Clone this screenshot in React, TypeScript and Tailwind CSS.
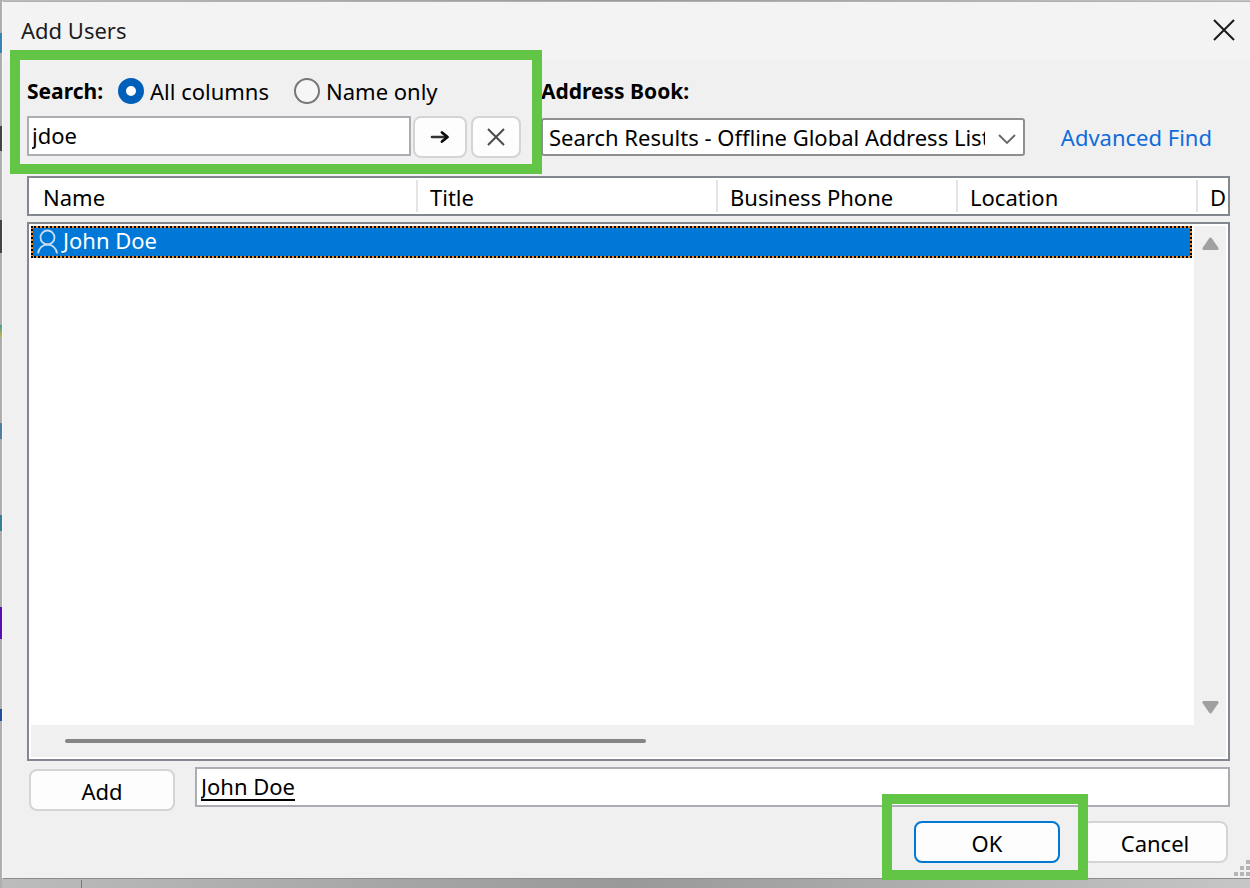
import type { ReactNode } from "react";

function Highlight({ className }: { className: string }) {
  return (
    <div
      aria-hidden="true"
      className={`pointer-events-none absolute border-[10px] border-[#62c546] ${className}`}
    />
  );
}

function PushButton({
  className = "border-[#d4d4d4]",
  children,
}: {
  className?: string;
  children: ReactNode;
}) {
  return (
    <button
      type="button"
      className={`flex h-[42px] w-[146px] shrink-0 items-center justify-center rounded-lg border-2 bg-[#fdfdfd] pt-px ${className}`}
    >
      {children}
    </button>
  );
}

function BackdropEdge() {
  return (
    <div aria-hidden="true" className="pointer-events-none absolute inset-y-0 left-0 w-[2px] bg-[#aeaeae]">
      <i className="absolute top-[33px] h-5 w-full bg-[#3c83b5]" />
      <i className="absolute top-[126px] h-[25px] w-full bg-[#444]" />
      <i className="absolute top-[220px] h-[33px] w-full bg-[#444]" />
      <i className="absolute top-[325px] h-3 w-full bg-linear-to-b from-[#35a08c] to-[#c9b23c]" />
      <i className="absolute top-[423px] h-4 w-full bg-[#4d7fa3]" />
      <i className="absolute top-[515px] h-4 w-full bg-[#357f97]" />
      <i className="absolute top-[607px] h-8 w-full bg-[#5b0cb5]" />
      <i className="absolute top-[709px] h-3 w-full bg-[#1e4f9c]" />
    </div>
  );
}

const columns = [
  { name: "Name", width: "w-[389px] pl-[14px]" },
  { name: "Title", width: "w-[300px] pl-3" },
  { name: "Business Phone", width: "w-[240px] pl-3" },
  { name: "Location", width: "w-[240px] pl-3" },
];

export default function App() {
  return (
    <div className="relative flex min-h-screen flex-col bg-linear-to-r from-[#bcbcbc] via-[#999] to-[#c6c6c6] pt-px pb-[9px] pl-[2px] font-['Noto_Sans','Open_Sans',sans-serif] text-[22px] leading-7 text-black">
      <BackdropEdge />
      <div aria-hidden="true" className="absolute bottom-0 left-[81px] h-2 w-px bg-[#777]" />
      <main className="flex grow flex-col border-t border-b border-l border-t-[#b0b0b0] border-b-[#8c8c8c] border-l-[#fafafa] bg-[#f0f0f0]">
        <header className="flex h-[59px] items-center justify-between bg-[#f3f3f3] pr-[15px] pb-[3px] pl-[18px] text-[#1c1c1c]">
          <h1>Add Users</h1>
          <button type="button" aria-label="Close">
            <svg className="size-[22px]" viewBox="0 0 22 22" fill="none" stroke="#1a1a1a" strokeWidth="2">
              <path d="M1 1l20 20M21 1L1 21" />
            </svg>
          </button>
        </header>

        <div className="flex grow flex-col pr-5 pl-6">
          <div className="flex pt-4">
            <div className="relative mr-5 w-[494px] shrink-0">
              <div className="flex h-7 items-center">
                <label htmlFor="search" className="w-[91px] text-[21px] font-bold">
                  Search:
                </label>
                <label className="flex w-44 items-center gap-[6px] whitespace-nowrap">
                  <input
                    type="radio"
                    name="scope"
                    defaultChecked
                    className="size-[26px] shrink-0 appearance-none rounded-full border-2 border-[#777] bg-[#f6f6f6] checked:border-8 checked:border-[#005fb8] checked:bg-white"
                  />
                  All columns
                </label>
                <label className="flex items-center gap-[6px] whitespace-nowrap">
                  <input
                    type="radio"
                    name="scope"
                    className="size-[26px] shrink-0 appearance-none rounded-full border-2 border-[#777] bg-[#f6f6f6] checked:border-8 checked:border-[#005fb8] checked:bg-white"
                  />
                  Name only
                </label>
              </div>
              <div className="mt-[11px] flex h-[42px] items-start">
                <input
                  id="search"
                  type="text"
                  defaultValue="jdoe"
                  className="h-10 w-96 border-2 border-[#abadb3] bg-white pb-[2px] pl-[3px]"
                />
                <button
                  type="button"
                  aria-label="Search"
                  className="ml-[2px] flex h-[42px] w-[54px] items-center justify-center rounded-lg border-2 border-[#d4d4d4] bg-[#fdfdfd]"
                >
                  <svg className="h-4 w-5" viewBox="0 0 20 16" fill="none" strokeLinecap="round" strokeLinejoin="round">
                    <path d="M2 8h14" stroke="#333" strokeWidth="2.6" />
                    <path d="M12 3.500L17.500 8 12 12.500" stroke="#0a0a0a" strokeWidth="2.8" />
                  </svg>
                </button>
                <button
                  type="button"
                  aria-label="Clear search"
                  className="ml-1 flex h-[42px] w-[50px] items-center justify-center rounded-lg border-2 border-[#d4d4d4] bg-[#fdfdfd]"
                >
                  <svg className="size-[18px]" viewBox="0 0 18 18" fill="none" stroke="#4a4a4a" strokeWidth="2">
                    <path d="M1 1l16 16M17 1L1 17" />
                  </svg>
                </button>
              </div>
              <Highlight className="-top-[27px] -left-[17px] h-[124px] w-[532px]" />
            </div>

            <div className="flex min-w-0 grow flex-col">
              <label htmlFor="book" className="h-7 text-[21px] font-bold">
                Address Book:
              </label>
              <div className="mt-[13px] flex h-[38px] items-center justify-between gap-9 pr-[18px]">
                <div className="relative min-w-0 grow">
                  <select
                    id="book"
                    className="block h-[38px] w-full appearance-none rounded-[3px] border-2 border-[#8f8f8f] bg-white pr-[38px] pl-[6px]"
                  >
                    <option>Search Results - Offline Global Address List</option>
                  </select>
                  <svg
                    className="pointer-events-none absolute top-4 right-[9px] h-[11px] w-[18px]"
                    viewBox="0 0 18 11"
                    fill="none"
                    stroke="#666"
                    strokeWidth="1.8"
                  >
                    <path d="M1 1l8 8 8-8" />
                  </svg>
                </div>
                <a href="#advanced" className="whitespace-nowrap text-[#0f6cdb]">
                  Advanced Find
                </a>
              </div>
            </div>
          </div>

          <div className="relative mt-[18px] flex grow flex-col">
            <table className="flex grow flex-col gap-[6px] text-left">
              <thead className="block border-2 border-[#828790] bg-white">
                <tr className="flex h-9 items-center overflow-hidden">
                  {columns.map((c) => (
                    <th
                      key={c.name}
                      scope="col"
                      className={`flex h-8 shrink-0 items-center border-r-2 border-[#e5e5e5] pt-px font-normal whitespace-nowrap ${c.width}`}
                    >
                      {c.name}
                    </th>
                  ))}
                  <th scope="col" className="w-4 grow overflow-hidden pt-px pl-3 font-normal">
                    D
                  </th>
                </tr>
              </thead>
              <tbody className="block grow border-2 border-[#828790] bg-white pt-[2px] pr-9 pl-[2px]">
                <tr className="block bg-[#f08c28]">
                  <td className="flex h-8 items-center gap-[5px] border-2 border-dotted border-black bg-[#0078d7] bg-clip-padding pr-0 pb-1 pl-1 text-white">
                    <svg
                      className="mt-[3px] h-[25px] w-[21px]"
                      viewBox="0 0 21 25"
                      fill="none"
                      stroke="#c9dcf0"
                      strokeWidth="1.8"
                    >
                      <circle cx="10.5" cy="8.5" r="7" />
                      <path d="M1 24.500c.5-5 4.500-9 9.500-9s9 4 9.500 9" />
                    </svg>
                    <span className="leading-6">John Doe</span>
                  </td>
                </tr>
              </tbody>
            </table>
            <div
              aria-hidden="true"
              className="absolute top-[50px] right-1 bottom-1 flex w-8 flex-col items-center justify-between bg-[#f0f0f0] pt-[11px] pb-[43px]"
            >
              <svg className="h-[13px] w-[17px]" viewBox="0 0 17 13" fill="#a0a0a0">
                <path d="M7 1.500Q8.500-.5 10 1.500L16.500 11Q17 13 15 13H2Q0 13 .5 11z" />
              </svg>
              <svg className="h-[13px] w-[17px]" viewBox="0 0 17 13" fill="#a0a0a0">
                <path d="M7 11.500Q8.500 13.500 10 11.500L16.500 2Q17 0 15 0H2Q0 0 .5 2z" />
              </svg>
            </div>
            <div
              aria-hidden="true"
              className="absolute right-9 bottom-1 left-1 flex h-8 items-center bg-[#f0f0f0] pl-[34px]"
            >
              <div className="h-1 w-[51.5%] rounded-full bg-[#858585]" />
            </div>
          </div>

          <div className="mt-[6px] flex items-start gap-5 pl-[2px]">
            <div className="pt-[2px]">
              <PushButton>Add</PushButton>
            </div>
            <input
              type="text"
              aria-label="Selected users"
              defaultValue="John Doe"
              className="h-10 min-w-0 grow border-2 border-[#abadb3] bg-white pb-[2px] pl-1 underline decoration-2 underline-offset-4"
            />
          </div>

          <footer className="mt-[10px] flex justify-end gap-[22px] pr-[2px] pb-[15px]">
            <div className="relative">
              <PushButton className="border-[#0078d4]">OK</PushButton>
              <Highlight className="-top-[27px] -left-8 h-[86px] w-[206px]" />
            </div>
            <PushButton>Cancel</PushButton>
          </footer>
        </div>
      </main>
      <svg aria-hidden="true" className="absolute right-0 bottom-3 h-4 w-4" viewBox="0 0 16 16" fill="#b5b5b5">
        <path d="M12 0h4v4h-4zM6 6h4v4H6zM12 6h4v4h-4zM0 12h4v4H0zM6 12h4v4H6zM12 12h4v4h-4z" />
      </svg>
    </div>
  );
}
